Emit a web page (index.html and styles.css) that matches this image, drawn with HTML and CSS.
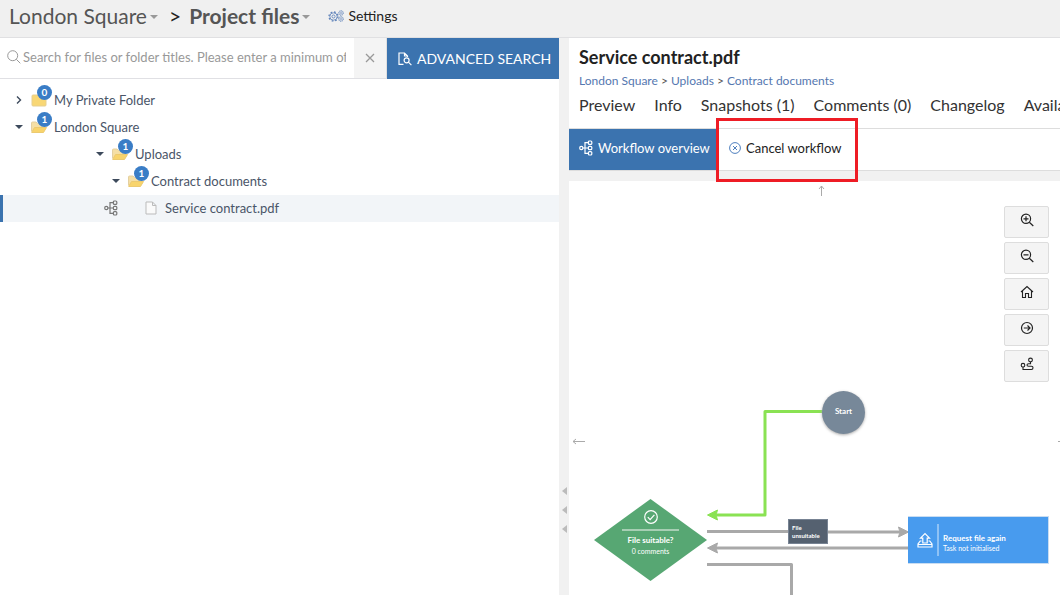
FILE: index.html
```html
<!DOCTYPE html>
<html lang="en">
<head>
<meta charset="utf-8">
<meta name="viewport" content="width=device-width, initial-scale=1">
<title>Project files</title>
<link rel="stylesheet" href="styles.css">
</head>
<body>
<svg class="sprite" aria-hidden="true">
  <symbol id="flow" viewBox="0 0 14 16"><g fill="none" stroke="currentColor" stroke-width="1.2"><circle cx="2.3" cy="8" r="1.6"/><rect x="9.4" y="1" width="3.4" height="3.4" rx="1"/><rect x="9.4" y="6.3" width="3.4" height="3.4" rx="1"/><rect x="9.4" y="11.6" width="3.4" height="3.4" rx="1"/><path d="M4 8h5.400M9.400 2.700H6v10.600h3.400"/></g></symbol>
  <symbol id="folder" viewBox="0 0 16 14"><path d="M1 3a1 1 0 0 1 1-1h4l1.500 1.500H14a1 1 0 0 1 1 1V12a1 1 0 0 1-1 1H2a1 1 0 0 1-1-1z" fill="#f8d775" stroke="#e6cf90"/></symbol>
  <symbol id="folder-open" viewBox="0 0 16 14"><path d="M.5 11.500V3a1 1 0 0 1 1-1H5l1.500 1.500H12a1 1 0 0 1 1 1V7" fill="#f5dfa5" stroke="#e4d0a0"/><path d="M3.500 7.500H15.500L12.500 12.500H.7z" fill="#f8d46c" stroke="#ecca70"/></symbol>
  <symbol id="gear" viewBox="0 0 12 12"><g fill="none" stroke="currentColor"><circle cx="6" cy="6" r="4.900" stroke-width="1.500" stroke-dasharray="1.900 1.948"/><circle cx="6" cy="6" r="4" stroke-width=".9"/><circle cx="6" cy="6" r="1.700"/></g></symbol>
</svg>

<header class="topbar">
  <button class="crumb">London Square <span class="caret"></span></button>
  <span class="crumb-sep">&gt;</span>
  <button class="crumb crumb-current">Project files <span class="caret"></span></button>
  <button class="settings">
    <svg class="gears" viewBox="0 0 16 12" aria-hidden="true"><use href="#gear" x="0" y="1" width="11" height="11"/><use href="#gear" x="10" y="0" width="6" height="6"/><use href="#gear" x="10" y="6" width="6" height="6"/></svg>
    Settings
  </button>
</header>

<main class="workspace">
  <section class="files">
    <form class="search">
      <label class="search-field">
        <svg class="icon-14" viewBox="0 0 14 14" aria-hidden="true"><g fill="none" stroke="currentColor"><circle cx="5.700" cy="5.700" r="5"/><path d="M9.300 9.300l4 4"/></g></svg>
        <input class="search-input" type="text" aria-label="Search files" placeholder="Search for files or folder titles. Please enter a minimum of 3 characters">
      </label>
      <button class="clear" type="button" aria-label="Clear"><svg class="icon-10" viewBox="0 0 10 10"><path d="M1 1l8 8M9 1l-8 8" stroke="currentColor" stroke-width="1.300"/></svg></button>
      <button class="advanced" type="button">
        <svg class="icon-14" viewBox="0 0 14 14" aria-hidden="true"><g fill="none" stroke="currentColor" stroke-width="1.200"><path d="M5.500 12.400H1V1h5.500l3 3v1M6.500 1v3h3"/><circle cx="8.600" cy="8.300" r="2.500"/><path d="M10.400 10.100l3 3"/></g></svg>
        ADVANCED SEARCH
      </button>
    </form>
    <ul class="tree">
      <li class="node"><svg class="toggle" viewBox="0 0 10 10"><path d="M3 1.500L6.500 5 3 8.500" fill="none" stroke="currentColor" stroke-width="1.400"/></svg><span class="folder"><svg class="folder-icon"><use href="#folder"/></svg><span class="badge">0</span></span>My Private Folder</li>
      <li class="node"><svg class="toggle" viewBox="0 0 10 10"><path d="M1 3h8L5 7z" fill="currentColor"/></svg><span class="folder"><svg class="folder-icon"><use href="#folder-open"/></svg><span class="badge">1</span></span>London Square</li>
      <li class="node level-2"><svg class="toggle" viewBox="0 0 10 10"><path d="M1 3h8L5 7z" fill="currentColor"/></svg><span class="folder"><svg class="folder-icon"><use href="#folder-open"/></svg><span class="badge">1</span></span>Uploads</li>
      <li class="node level-3"><svg class="toggle" viewBox="0 0 10 10"><path d="M1 3h8L5 7z" fill="currentColor"/></svg><span class="folder"><svg class="folder-icon"><use href="#folder-open"/></svg><span class="badge">1</span></span>Contract documents</li>
      <li class="node node-file"><svg class="flow-icon"><use href="#flow"/></svg><svg class="file-icon" viewBox="0 0 12 14" aria-hidden="true"><path d="M1 1h6.500L11 4.500V13H1zM7.500 1v3.500H11" fill="#fafafa" stroke="#bbb"/></svg>Service contract.pdf</li>
    </ul>
  </section>

  <div class="splitter"><span class="grip"></span><span class="grip"></span><span class="grip"></span></div>

  <section class="detail">
    <div class="detail-head">
      <h1 class="title">Service contract.pdf</h1>
      <nav class="path"><a href="#">London Square</a> &gt; <a href="#">Uploads</a> &gt; <a href="#">Contract documents</a></nav>
      <nav class="tabs"><a href="#">Preview</a><a href="#">Info</a><a href="#">Snapshots (1)</a><a href="#">Comments (0)</a><a href="#">Changelog</a><a href="#">Available workflows</a></nav>
    </div>
    <div class="toolbar">
      <button class="tool tool-active"><svg class="flow-icon"><use href="#flow"/></svg>Workflow overview</button>
      <div class="tool-wrap">
        <button class="tool"><svg class="cancel-icon" viewBox="0 0 12 12" aria-hidden="true"><g fill="none" stroke="currentColor"><circle cx="6" cy="6" r="5.400"/><path d="M4 4l4 4M8 4l-4 4"/></g></svg>Cancel workflow</button>
        <span class="highlight"></span>
      </div>
    </div>
    <div class="canvas">
      <svg class="edges" aria-hidden="true">
        <g fill="none" stroke="#a9a9a9" stroke-width="3" stroke-linejoin="round">
          <path d="M254 230.500H196V334H145" stroke="#8ae253"/>
          <path d="M138 350.500H230V351H331"/>
          <path d="M145 367H340"/>
          <path d="M138 383.500H222.500V900"/>
        </g>
        <path d="M138.500 334l10-5-1 3.500v3l1 3.500z" fill="#8ae253" stroke="#8ae253"/>
        <path d="M138.500 367l10-5-1 3.500v3l1 3.500z" fill="#a9a9a9" stroke="#a9a9a9"/>
        <path d="M339.500 351l-10-5 1 3.500v3l-1 3.500z" fill="#a9a9a9" stroke="#a9a9a9"/>
        <g fill="none" stroke="#aaa"><path d="M252.500 15V5M250 8l2.500-3 2.500 3M4 260.500H16M7 258l-3 2.500 3 2.500M489 260.500h12"/></g>
      </svg>
      <div class="start">Start</div>
      <div class="decision">
        <svg class="icon-14" viewBox="0 0 14 14" aria-hidden="true"><g fill="none" stroke="currentColor" stroke-width="1.200"><circle cx="7" cy="7" r="6.300"/><path d="M3.800 7.200l2.300 2.400 4.300-4.800"/></g></svg>
        <span class="rule"></span><strong>File suitable?</strong><span>0 comments</span>
      </div>
      <div class="edge-label">File<br>unsuitable</div>
      <div class="task">
        <svg class="upload-icon" viewBox="0 0 16 16" aria-hidden="true"><path d="M5.800 11V6.200H3.500L8 1.500l4.500 4.700h-2.300V11zM4.500 9H3.200L1 12v3h14v-3l-2.200-3h-1.300M1 12.500h14" fill="none" stroke="currentColor" stroke-width="1.200"/></svg>
        <span class="task-text"><strong>Request file again</strong><span>Task not initialised</span></span>
      </div>
      <div class="controls">
        <button aria-label="Zoom in"><svg class="icon-14" viewBox="0 0 14 14"><g fill="none" stroke="currentColor" stroke-width="1.200"><circle cx="6" cy="5.800" r="4.600"/><path d="M9.300 9.200l4 3.800M3.500 5.800h5M6 3.300v5"/></g></svg></button>
        <button aria-label="Zoom out"><svg class="icon-14" viewBox="0 0 14 14"><g fill="none" stroke="currentColor" stroke-width="1.200"><circle cx="6" cy="5.800" r="4.600"/><path d="M9.300 9.200l4 3.800M3.500 5.800h5"/></g></svg></button>
        <button aria-label="Home"><svg class="icon-14" viewBox="0 0 14 14"><path d="M1 7l6-5.500L13 7M2.500 6v6.500h3V8.500h3v4h3V6" fill="none" stroke="currentColor" stroke-width="1.100"/></svg></button>
        <button aria-label="Go to current step"><svg class="icon-14" viewBox="0 0 14 14"><g fill="none" stroke="currentColor" stroke-width="1.200"><circle cx="7" cy="7" r="5.500"/><path d="M3.800 7H10M7.500 4.500L10 7 7.500 9.500"/></g></svg></button>
        <button aria-label="Show path"><svg class="icon-14" viewBox="0 0 14 14"><g fill="none" stroke="currentColor" stroke-width="1.100"><circle cx="10.500" cy="3" r="1.900"/><circle cx="3" cy="8.200" r="1.800"/><path d="M10.500 5v1.700H8.500c-2 0-2 2.500 0 2.500h3c2 0 2 3.300 0 3.300H3V10"/></g></svg></button>
      </div>
    </div>
  </section>
</main>
</body>
</html>
```

FILE: styles.css
```css
* { box-sizing: border-box; }
body {
  margin: 0;
  min-height: 100vh;
  display: flex;
  flex-direction: column;
  overflow: hidden;
  background: #fff;
  color: #222;
  font-family: Lato, "Open Sans", sans-serif;
  font-size: 13px;
}
button { border: 0; padding: 0; background: none; font: inherit; color: inherit; cursor: pointer; }
a { color: inherit; text-decoration: none; }
svg { flex: none; display: block; }
.sprite { position: absolute; width: 0; height: 0; }
.icon-10 { width: 10px; height: 10px; }
.icon-14 { width: 14px; height: 14px; }

.topbar {
  display: flex;
  align-items: center;
  height: 38px;
  padding: 0 9px 6px;
  background: #f0f0f0;
  border-bottom: 1px solid #e0e0e2;
  white-space: nowrap;
}
.crumb { display: flex; align-items: center; gap: 3px; font-size: 21px; line-height: 26px; color: #555; }
.crumb-current { font-weight: 700; }
.crumb-sep { margin: 0 8px 0 11px; font-size: 21px; line-height: 26px; }
.caret { margin-top: 3px; border: 4px solid transparent; border-top-color: #999; border-bottom: 0; }
.settings { display: flex; align-items: center; gap: 4px; margin-left: 18px; font-size: 14px; }
.gears { width: 16px; height: 12px; color: #6285bb; }

.workspace {
  flex: 1;
  display: grid;
  grid-template-columns: minmax(0, 559fr) 10px minmax(0, 491fr);
}
.search { display: flex; height: 41px; border-bottom: 1px solid #e0e0e4; }
.search-field { flex: 1; display: flex; align-items: center; gap: 2px; padding: 0 8px 2px 7px; color: #999; min-width: 0; }
.search-input { flex: 1; min-width: 0; border: 0; outline: 0; padding: 0; font: inherit; }
.search-input::placeholder { color: #999; opacity: 1; }
.clear { width: 33px; display: grid; place-items: center; background: #f4f4f4; border-right: 1px solid #e0e0e0; color: #999; }
.advanced {
  width: 172px;
  height: 41px;
  display: flex;
  align-items: center;
  gap: 5px;
  padding-left: 11px;
  background: #3b73af;
  color: #fff;
  font-size: 14px;
  white-space: nowrap;
}

.tree { margin: 0; padding: 8px 0 0; list-style: none; color: #4a5568; }
.node { display: flex; align-items: center; height: 27px; padding: 0 0 2px 14px; white-space: nowrap; }
.level-2 { padding-left: 95px; }
.level-3 { padding-left: 111px; }
.toggle { width: 10px; height: 10px; margin-right: 7px; color: #3d4a5c; }
.folder { position: relative; width: 16px; height: 14px; margin-right: 7px; }
.folder-icon { width: 16px; height: 14px; }
.badge {
  position: absolute;
  left: 6px;
  top: -8px;
  width: 15px;
  height: 15px;
  border-radius: 50%;
  background: #3a7dc6;
  color: #fff;
  font-size: 10px;
  font-weight: 700;
  line-height: 15px;
  text-align: center;
}
.node-file { padding-left: 101px; background: #f2f5f8; border-left: 3px solid #3b73af; }
.flow-icon { width: 14px; height: 16px; }
.node-file .flow-icon { color: #777; }
.file-icon { width: 12px; height: 14px; margin: 0 8px 0 27px; }

.splitter { display: flex; flex-direction: column; align-items: center; gap: 11px; padding: 449px 0 60px; background: #f1f1f1; }
.grip { border: 4px solid transparent; border-right: 5px solid #bbb; border-left: 0; }

.detail { display: flex; flex-direction: column; background: #f1f1f1; }
.detail-head { height: 91px; padding: 8px 0 0 10px; background: #fff; border-bottom: 1px solid #ddd; white-space: nowrap; overflow: hidden; }
.title { margin: 0; font-size: 18px; line-height: 22px; font-weight: 700; }
.path { margin-top: 5px; font-size: 12px; line-height: 16px; color: #555; }
.path a { color: #5577b0; }
.tabs { display: flex; gap: 19px; margin-top: 6px; font-size: 16px; line-height: 20px; color: #333; }
.toolbar { display: flex; height: 42px; background: #fff; border-bottom: 1px solid #ddd; }
.tool { display: flex; align-items: center; gap: 5px; height: 41px; padding: 0 12px 3px; white-space: nowrap; }
.tool-active { width: 148px; padding: 0 0 3px 10px; background: #3b73af; color: #fff; }
.tool-wrap { position: relative; width: 141px; }
.cancel-icon { width: 12px; height: 12px; color: #4e7fbe; }
.highlight { position: absolute; inset: -11px 0 -12px -1px; border: 3px solid #ee1c25; z-index: 2; pointer-events: none; }

.canvas { position: relative; flex: 1; margin-top: 10px; background: #fff; overflow: hidden; }
.edges { position: absolute; inset: 0; width: 100%; height: 100%; }
.start {
  position: absolute;
  left: 253px;
  top: 210px;
  width: 43px;
  height: 43px;
  border-radius: 50%;
  background: #778899;
  box-shadow: 0 1px 3px #aaa;
  color: #fff;
  font-size: 8px;
  font-weight: 700;
  line-height: 41px;
  text-align: center;
}
.decision {
  position: absolute;
  left: 25px;
  top: 318px;
  width: 113px;
  height: 82px;
  display: flex;
  flex-direction: column;
  align-items: center;
  padding-top: 11px;
  clip-path: polygon(50% 0, 100% 50%, 50% 100%, 0 50%);
  background: #57a773;
  color: #fff;
  font-size: 8px;
  line-height: 11px;
}
.decision span:last-child { font-size: 7px; }
.rule { width: 57px; height: 2px; margin: 5px 0 4px; background: #a7cfb4; }
.edge-label {
  position: absolute;
  left: 219px;
  top: 338px;
  width: 40px;
  height: 25px;
  padding: 4px 3px;
  border: 1px solid #778393;
  background: #556170;
  color: #fff;
  font-size: 6px;
  font-weight: 700;
  line-height: 8px;
}
.task {
  position: absolute;
  left: 339px;
  top: 335px;
  width: 141px;
  height: 48px;
  display: flex;
  align-items: center;
  gap: 4px;
  padding-left: 9px;
  border: 1px solid #c9ddf2;
  border-left: 0;
  background: #489bee;
  color: #fff;
  font-size: 8px;
  line-height: 10px;
}
.upload-icon { width: 16px; height: 16px; }
.task-text { display: flex; flex-direction: column; padding: 9px 0 3px 4px; border-left: 2px solid #8fc2f5; }
.task-text span { font-size: 7px; }
.controls { position: absolute; right: 11px; top: 25px; display: grid; gap: 4px; }
.controls button {
  width: 45px;
  height: 32px;
  display: grid;
  place-items: center;
  padding-bottom: 4px;
  border: 1px solid #ddd;
  border-radius: 2px;
  background: #f4f4f4;
}
```
